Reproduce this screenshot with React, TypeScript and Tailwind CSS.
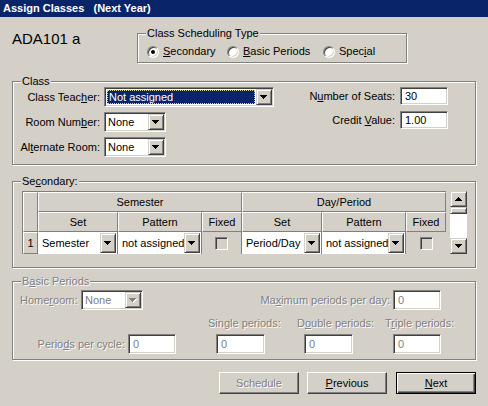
import React from "react";

const sunken =
  "border border-t-[#808080] border-l-[#808080] border-b-white border-r-white shadow-[inset_1px_1px_0_#404040,inset_-1px_-1px_0_#d4d0c8]";
const raisedBtn =
  "border border-t-[#d4d0c8] border-l-[#d4d0c8] border-b-[#404040] border-r-[#404040] shadow-[inset_1px_1px_0_#fff,inset_-1px_-1px_0_#808080]";
const headerCell =
  "bg-[#d4d0c8] border border-t-white border-l-white border-r-[#808080] border-b-[#808080] flex items-center justify-center";
const disabledText = "text-[#808080] [text-shadow:1px_1px_0_#fff]";

function Arrow({ up = false, disabled = false }: { up?: boolean; disabled?: boolean }) {
  const rows = up ? [3, 2, 1, 0] : [0, 1, 2, 3];
  const shape = (dx: number, fill: string) =>
    rows.map((inset, i) => (
      <rect key={`${fill}${i}`} x={inset + dx} y={i + dx} width={7 - inset * 2} height={1} fill={fill} />
    ));
  return (
    <svg width="8" height="5" viewBox="0 0 8 5" className="block" shapeRendering="crispEdges">
      {disabled && shape(1, "#fff")}
      {shape(0, disabled ? "#808080" : "#000")}
    </svg>
  );
}

function Combo({
  value,
  className = "",
  selected = false,
  disabled = false,
}: {
  value: string;
  className?: string;
  selected?: boolean;
  disabled?: boolean;
}) {
  return (
    <div className={`flex h-[20px] bg-white p-[1px] ${sunken} ${className}`}>
      <div className="flex-1 min-w-0 flex p-[1px]">
        {selected ? (
          <span className="flex-1 flex items-center bg-[#0a246a] text-white pl-[2px] outline-1 outline-dotted outline-[#d8d49a] -outline-offset-1">
            {value}
          </span>
        ) : (
          <span className={`flex-1 flex items-center pl-[1px] ${disabled ? "text-[#808080]" : ""}`}>{value}</span>
        )}
      </div>
      <div className={`w-[16px] flex items-center justify-center bg-[#d4d0c8] ${raisedBtn}`}>
        <Arrow disabled={disabled} />
      </div>
    </div>
  );
}

function Field({ value, className = "", disabled = false }: { value: string; className?: string; disabled?: boolean }) {
  return (
    <div className={`flex items-center bg-white pl-[4px] ${sunken} ${disabled ? "text-[#808080]" : ""} ${className}`}>
      {value}
    </div>
  );
}

function Group({ label, className = "", children }: { label: React.ReactNode; className?: string; children?: React.ReactNode }) {
  return (
    <fieldset className={`border border-[#808080] shadow-[inset_1px_1px_0_#fff,1px_1px_0_#fff] ${className}`}>
      <legend className="ml-[8px] px-[1px] bg-[#d4d0c8] leading-[13px]">{label}</legend>
      {children}
    </fieldset>
  );
}

function Radio({ checked = false, label, className = "" }: { checked?: boolean; label: React.ReactNode; className?: string }) {
  return (
    <div className={`flex items-center ${className}`}>
      <div className="w-[12px] h-[12px] rounded-full bg-white border border-t-[#808080] border-l-[#808080] border-b-white border-r-white shadow-[inset_1px_1px_0_#404040,inset_-1px_-1px_0_#d4d0c8] flex items-center justify-center">
        {checked && <div className="w-[4px] h-[4px] rounded-full bg-black" />}
      </div>
      <span className="ml-[4px]">{label}</span>
    </div>
  );
}

function Checkbox() {
  return <div className={`w-[13px] h-[13px] bg-[#d4d0c8] ${sunken}`} />;
}

function GridCombo({ value }: { value: string }) {
  return (
    <div className="flex bg-white border-r border-[#808080] p-[1px]">
      <span className="flex-1 min-w-0 flex items-center pl-[3px] whitespace-nowrap overflow-hidden">{value}</span>
      <div className={`w-[16px] flex items-center justify-center bg-[#d4d0c8] ${raisedBtn}`}>
        <Arrow />
      </div>
    </div>
  );
}

function Button({
  children,
  disabled = false,
  isDefault = false,
  className = "",
}: {
  children: React.ReactNode;
  disabled?: boolean;
  isDefault?: boolean;
  className?: string;
}) {
  const frame = isDefault
    ? "border border-black shadow-[inset_1px_1px_0_#fff,inset_-1px_-1px_0_#404040,inset_-2px_-2px_0_#808080]"
    : "border border-t-white border-l-white border-b-[#404040] border-r-[#404040] shadow-[inset_-1px_-1px_0_#808080]";
  return (
    <div className={`w-[80px] h-[22px] flex items-center justify-center bg-[#d4d0c8] ${frame} ${disabled ? disabledText : ""} ${className}`}>
      {children}
    </div>
  );
}

export default function App() {
  return (
    <div className="w-[488px] h-[406px] overflow-hidden bg-[#d4d0c8] text-black text-[11px] leading-[13px] font-['Liberation_Sans',Arial,sans-serif] flex flex-col">
      <div className="h-[17px] shrink-0 bg-[#0a246a] text-white font-bold text-[11px] flex items-center pl-[3px] whitespace-pre">
        Assign Classes   (Next Year)
      </div>

      <div className="px-[12px] flex flex-col">
        {/* header row */}
        <div className="h-[58px] flex items-start">
          <div className="w-[125px] pt-[13px] text-[15px] leading-[17px]">ADA101 a</div>
          <Group label="Class Scheduling Type" className="mt-[10px] w-[270px] h-[36px]">
            <div className="flex items-center mt-[5px] pl-[9px] h-[13px]">
              <Radio checked className="w-[80px]" label={<><u>S</u>econdary</>} />
              <Radio className="w-[96px]" label={<><u>B</u>asic Periods</>} />
              <Radio label={<>Spec<u>i</u>al</>} />
            </div>
          </Group>
        </div>

        {/* Class */}
        <Group label="Class" className="h-[90px] w-[464px]">
          <div className="flex -mt-[1px]">
            <div className="flex flex-col gap-[5px]">
              <div className="flex items-center">
                <span className="w-[87px] text-right">Class Teac<u>h</u>er:</span>
                <Combo value="Not assigned" selected className="ml-[4px] w-[170px]" />
              </div>
              <div className="flex items-center">
                <span className="w-[87px] text-right">Room Num<u>b</u>er:</span>
                <Combo value="None" className="ml-[4px] w-[62px]" />
              </div>
              <div className="flex items-center">
                <span className="w-[87px] text-right">Al<u>t</u>ernate Room:</span>
                <Combo value="None" className="ml-[4px] w-[62px]" />
              </div>
            </div>
            <div className="ml-auto mr-[27px] flex flex-col gap-[6px] items-end">
              <div className="flex items-center">
                <span>N<u>u</u>mber of Seats:</span>
                <Field value="30" className="ml-[5px] w-[48px] h-[18px]" />
              </div>
              <div className="flex items-center">
                <span>Credit <u>V</u>alue:</span>
                <Field value="1.00" className="ml-[5px] w-[48px] h-[18px]" />
              </div>
            </div>
          </div>
        </Group>

        {/* Secondary */}
        <Group label={<>Se<u>c</u>ondary:</>} className="mt-[10px] h-[93px] w-[464px]">
          <div className="flex mt-[3px] ml-[9px]">
            <div className="grid grid-cols-[15px_80px_84px_40px_80px_84px_40px] grid-rows-[20px_20px_22px] border-l border-t border-[#808080]">
              <div className={`${headerCell} row-span-2`} />
              <div className={`${headerCell} col-span-3`}>Semester</div>
              <div className={`${headerCell} col-span-3`}>Day/Period</div>
              <div className={headerCell}>Set</div>
              <div className={headerCell}>Pattern</div>
              <div className={headerCell}>Fixed</div>
              <div className={headerCell}>Set</div>
              <div className={headerCell}>Pattern</div>
              <div className={headerCell}>Fixed</div>

              <div className={headerCell}>1</div>
              <GridCombo value="Semester" />
              <GridCombo value="not assigned" />
              <div className="flex items-center justify-center border-r border-[#808080]">
                <Checkbox />
              </div>
              <GridCombo value="Period/Day" />
              <GridCombo value="not assigned" />
              <div className="flex items-center justify-center">
                <Checkbox />
              </div>
            </div>

            <div className="ml-[4px] w-[17px] h-[63px] flex flex-col bg-white">
              <div className={`h-[16px] shrink-0 flex items-center justify-center bg-[#d4d0c8] ${raisedBtn}`}>
                <Arrow up />
              </div>
              <div className={`h-[7px] shrink-0 bg-[#d4d0c8] ${raisedBtn}`} />
              <div className="flex-1" />
              <div className={`h-[16px] shrink-0 flex items-center justify-center bg-[#d4d0c8] ${raisedBtn}`}>
                <Arrow />
              </div>
            </div>
          </div>
        </Group>

        {/* Basic Periods */}
        <Group label={<span className={disabledText}>B<u>a</u>sic Periods</span>} className="mt-[7px] h-[85px] w-[464px]">
          <div className="flex items-center mt-[2px] h-[20px]">
            <span className={`w-[68px] pl-[7px] ${disabledText}`}>Home<u>r</u>oom:</span>
            <Combo value="None" disabled className="w-[62px]" />
            <span className={`ml-auto ${disabledText}`}>Ma<u>x</u>imum periods per day:</span>
            <Field value="0" disabled className="ml-[3px] mr-[34px] w-[48px] h-[20px]" />
          </div>
          <div className="flex items-end mt-[7px]">
            <div className="flex items-center h-[20px]">
              <span className={`w-[112px] text-right ${disabledText}`}>Perio<u>d</u>s per cycle:</span>
              <Field value="0" disabled className="ml-[3px] w-[48px] h-[20px]" />
            </div>
            <div className="ml-[32px] w-[89px] flex flex-col">
              <span className={`whitespace-nowrap ${disabledText}`}>Single periods:</span>
              <Field value="0" disabled className="mt-[4px] ml-[8px] w-[49px] h-[20px]" />
            </div>
            <div className="w-[88px] flex flex-col">
              <span className={`whitespace-nowrap ${disabledText}`}>D<u>o</u>uble periods:</span>
              <Field value="0" disabled className="mt-[4px] ml-[7px] w-[49px] h-[20px]" />
            </div>
            <div className="flex flex-col">
              <span className={`whitespace-nowrap ${disabledText}`}>T<u>r</u>iple periods:</span>
              <Field value="0" disabled className="mt-[4px] ml-[8px] w-[48px] h-[20px]" />
            </div>
          </div>
        </Group>

        {/* buttons */}
        <div className="mt-[12px] flex justify-end">
          <Button disabled>Schedule</Button>
          <Button className="ml-[8px]">
            <span>
              <u>P</u>revious
            </span>
          </Button>
          <Button isDefault className="ml-[9px]">
            <span>
              <u>N</u>ext
            </span>
          </Button>
        </div>
      </div>
    </div>
  );
}
